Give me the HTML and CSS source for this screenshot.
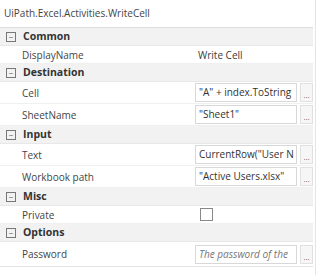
FILE: index.html
```html
<!DOCTYPE html>
<html lang="en">
<head>
  <meta charset="UTF-8" />
  <title>Properties</title>
  <link rel="stylesheet" href="styles.css">
</head>
<body>
  <div class="props">
    <div class="title">UiPath.Excel.Activities.WriteCell</div>

    <div class="grid">
      <div class="cat"><span class="toggle">−</span>Common</div>
      <div class="row">
        <div class="name">DisplayName</div>
        <div class="val plain">Write Cell</div>
      </div>

      <div class="cat"><span class="toggle">−</span>Destination</div>
      <div class="row tall">
        <div class="name">Cell</div>
        <div class="val"><span class="box">"A" + index.ToString</span><span class="dots">…</span></div>
      </div>
      <div class="row tall">
        <div class="name">SheetName</div>
        <div class="val"><span class="box">"Sheet1"</span><span class="dots">…</span></div>
      </div>

      <div class="cat"><span class="toggle">−</span>Input</div>
      <div class="row tall">
        <div class="name">Text</div>
        <div class="val"><span class="box">CurrentRow("User N</span><span class="dots">…</span></div>
      </div>
      <div class="row tall">
        <div class="name">Workbook path</div>
        <div class="val"><span class="box">"Active Users.xlsx"</span><span class="dots">…</span></div>
      </div>

      <div class="cat"><span class="toggle">−</span>Misc</div>
      <div class="row">
        <div class="name">Private</div>
        <div class="val"><span class="check"></span></div>
      </div>

      <div class="cat"><span class="toggle">−</span>Options</div>
      <div class="row tall last">
        <div class="name">Password</div>
        <div class="val"><span class="box hint">The password of the</span><span class="dots">…</span></div>
      </div>
    </div>
  </div>
</body>
</html>
```

FILE: styles.css
```css
body {
  margin: 0;
  background-color: #fff;
  font-family: "Open Sans", "Noto Sans", sans-serif;
  font-size: 10px;
  color: #3a3a3a;
}
.props {
  width: 316px;
  border-right: 1px solid #e4e4e4;
  min-height: 275px;
  box-sizing: border-box;
}
.title {
  height: 27px;
  line-height: 26px;
  padding-left: 4px;
  font-size: 10px;
  color: #444;
}
.grid {
  border-top: 1px solid #dcdcdc;
  width: 313px;
}
.cat {
  height: 17px;
  line-height: 17px;
  background-color: #f2f2f2;
  font-weight: bold;
  font-size: 10.5px;
  color: #333;
  display: flex;
  align-items: center;
  border-bottom: 1px solid #e8e8e8;
}
.toggle {
  width: 8px;
  height: 8px;
  border: 1px solid #777;
  margin: 0 7px 0 6px;
  font-size: 8px;
  line-height: 7px;
  text-align: center;
  font-weight: normal;
  color: #555;
  box-sizing: content-box;
}
.row {
  height: 17px;
  display: flex;
  align-items: center;
  border-bottom: 1px solid #f0f0f0;
}
.row.tall {
  height: 21px;
}
.row.last {
  height: 24px;
  border-bottom: 1px solid #e4e4e4;
}
.name {
  width: 195px;
  padding-left: 22px;
  box-sizing: border-box;
  color: #444;
}
.val {
  display: flex;
  align-items: center;
  gap: 3px;
}
.val.plain {
  padding-left: 3px;
}
.box {
  width: 102px;
  height: 19px;
  line-height: 17px;
  border: 1px solid #d8d8d8;
  box-sizing: border-box;
  padding-left: 3px;
  white-space: nowrap;
  overflow: hidden;
  color: #333;
}
.box.hint {
  font-style: italic;
  color: #777;
}
.dots {
  width: 13px;
  height: 19px;
  border: 1px solid #e0e0e0;
  background-color: #f6f6f6;
  box-sizing: border-box;
  text-align: center;
  line-height: 22px;
  font-size: 8px;
  color: #666;
}
.check {
  width: 11px;
  height: 11px;
  border: 1px solid #888;
  margin-left: 5px;
}
```
